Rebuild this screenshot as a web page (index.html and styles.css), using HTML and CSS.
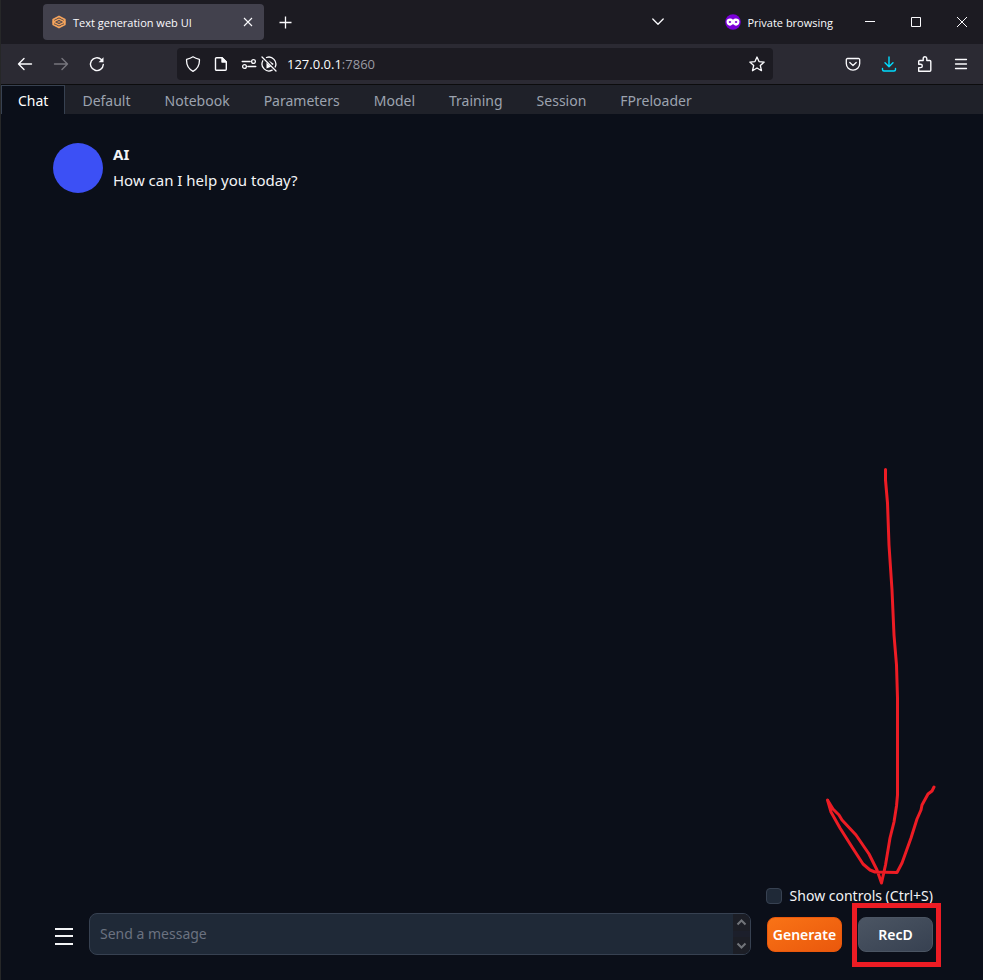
FILE: index.html
```html
<!DOCTYPE html>
<html lang="en">
<head>
<meta charset="utf-8">
<meta name="viewport" content="width=device-width, initial-scale=1">
<title>Text generation web UI</title>
<link rel="stylesheet" href="styles.css">
</head>
<body>
<div class="window">
  <header class="titlebar">
    <div class="browser-tab">
      <svg class="favicon" width="14" height="14" viewBox="0 0 14 14" fill="none" stroke="#f5a45c" stroke-linejoin="round"><path stroke-width="1.800" d="M7 1.500 12.800 4.500v5L7 12.500 1.200 9.500v-5Z"/><path stroke-width="1.400" d="M1.200 7 7 4.200 12.800 7 7 9.800Z"/><path d="M5.500 7h3" stroke-width="1.200"/></svg>
      <span class="tab-title">Text generation web UI</span>
      <button class="icon-btn tab-close" aria-label="Close tab"><svg width="10" height="10" viewBox="0 0 10 10" stroke="currentColor" stroke-width="1.100"><path d="M1 1l8 8M9 1 1 9"/></svg></button>
    </div>
    <button class="icon-btn new-tab" aria-label="New tab"><svg width="13" height="13" viewBox="0 0 13 13" stroke="currentColor" stroke-width="1.300"><path d="M6.500 .5v12M.5 6.500h12"/></svg></button>
    <button class="icon-btn tab-list" aria-label="List all tabs"><svg width="12" height="8" viewBox="0 0 12 8" fill="none" stroke="currentColor" stroke-width="1.300" stroke-linecap="round" stroke-linejoin="round"><path d="M.8 1 6 6.200 11.200 1"/></svg></button>
    <div class="private">
      <svg width="16" height="16" viewBox="0 0 16 16"><circle cx="8" cy="8" r="7.800" fill="#7a00d8"/><path fill="#fff" fill-rule="evenodd" d="M8 5.800C6.500 4 1.500 3.900 1.500 7.600c0 2.600 1.500 4.100 3.400 4.100C6.500 11.700 7 10.200 8 10.200s1.500 1.500 3.100 1.500c1.900 0 3.400-1.500 3.400-4.100C14.500 3.900 9.500 4 8 5.800ZM3.600 7.900c.6-1.200 2.100-1.200 2.700 0-.7 1.300-2 1.300-2.700 0Zm6.100 0c.6-1.200 2.100-1.200 2.700 0-.7 1.300-2 1.300-2.700 0Z"/></svg>
      <span>Private browsing</span>
    </div>
    <div class="window-buttons">
      <button class="icon-btn" aria-label="Minimize"><svg width="10" height="10" viewBox="0 0 10 10"><path d="M0 4h10v1H0z" fill="currentColor"/></svg></button>
      <button class="icon-btn" aria-label="Maximize"><svg width="10" height="10" viewBox="0 0 10 10" fill="none" stroke="currentColor"><path d="M.5.5h9v9h-9z"/></svg></button>
      <button class="icon-btn" aria-label="Close"><svg width="10" height="10" viewBox="0 0 10 10" stroke="currentColor"><path d="M0 0l10 10M10 0 0 10"/></svg></button>
    </div>
  </header>

  <div class="toolbar">
    <div class="nav-buttons">
      <button class="icon-btn" aria-label="Back"><svg width="16" height="16" viewBox="0 0 16 16" fill="none" stroke="currentColor" stroke-width="1.400" stroke-linecap="round" stroke-linejoin="round"><path d="M14.500 8H1.500M7 2.500 1.500 8 7 13.500"/></svg></button>
      <button class="icon-btn" aria-label="Forward" disabled><svg width="16" height="16" viewBox="0 0 16 16" fill="none" stroke="currentColor" stroke-width="1.400" stroke-linecap="round" stroke-linejoin="round"><path d="M1.500 8h13M9 2.500 14.500 8 9 13.500"/></svg></button>
      <button class="icon-btn" aria-label="Reload"><svg width="16" height="16" viewBox="0 0 16 16" fill="none" stroke="currentColor" stroke-width="1.400" stroke-linecap="round"><path d="M14.300 8.500A6.400 6.400 0 1 1 12.300 3.500"/><path d="M14.500 1.300v4.900H9.600Z" fill="currentColor" stroke="none"/></svg></button>
    </div>
    <div class="urlbar">
      <button class="icon-btn" aria-label="Tracking protection"><svg width="16" height="16" viewBox="0 0 16 16" fill="none" stroke="currentColor" stroke-width="1.300" stroke-linejoin="round"><path d="M8 .8c2 1.300 4 2 6.400 2.500C14.800 9 12.500 13 8 15.300 3.500 13 1.200 9 1.600 3.300 4 2.800 6 2.100 8 .8Z"/></svg></button>
      <button class="icon-btn" aria-label="Site information"><svg width="16" height="16" viewBox="0 0 16 16" fill="none" stroke="currentColor" stroke-width="1.400" stroke-linejoin="round"><path d="M3.500 1.700H9L13.300 6v7.300a1 1 0 0 1-1 1H3.500a1 1 0 0 1-1-1V2.700a1 1 0 0 1 1-1Z"/><path d="M9 1.700V6h4.300Z" fill="currentColor"/></svg></button>
      <button class="icon-btn" aria-label="Permissions"><svg width="16" height="16" viewBox="0 0 16 16" fill="none" stroke="currentColor" stroke-width="1.300" stroke-linecap="round"><path d="M1.200 5.500h8M6.800 10.500h8"/><circle cx="12.500" cy="5.500" r="1.900"/><circle cx="3.500" cy="10.500" r="1.900"/></svg></button>
      <button class="icon-btn autoplay" aria-label="Autoplay blocked"><svg width="16" height="16" viewBox="0 0 16 16" fill="none" stroke="currentColor" stroke-width="1.300" stroke-linecap="round"><path d="M1 1l14 14"/><path d="M5.500 1.500A7 7 0 0 1 14.200 11M1.800 4.800A7 7 0 0 0 11.200 14.200"/><path d="M7.500 4.200 12.800 8l-1.500 1ZM5.500 6.500l4.500 4.200L5.500 12.500Z" fill="currentColor" stroke="none"/></svg></button>
      <div class="url">127.0.0.1<span>:7860</span></div>
      <button class="icon-btn" aria-label="Bookmark this page"><svg width="16" height="16" viewBox="0 0 16 16" fill="none" stroke="currentColor" stroke-width="1.300" stroke-linejoin="round"><path d="M8 1l2 4.600 5.200.5-3.900 3.400 1.200 5.200L8 12l-4.500 2.700 1.200-5.200L.8 6.100 6 5.600Z"/></svg></button>
    </div>
    <div class="tool-buttons">
      <button class="icon-btn" aria-label="Save to Pocket"><svg width="16" height="16" viewBox="0 0 16 16" fill="none" stroke="currentColor" stroke-width="1.300" stroke-linecap="round" stroke-linejoin="round"><path d="M2.500 2.500h11a1.200 1.200 0 0 1 1.200 1.200V7.500a6.700 6.700 0 0 1-13.400 0V3.700a1.200 1.200 0 0 1 1.200-1.200Z"/><path d="M4.800 6.500 8 9.500l3.200-3"/></svg></button>
      <button class="icon-btn download" aria-label="Downloads"><svg width="16" height="16" viewBox="0 0 16 16" fill="none" stroke="currentColor" stroke-width="1.400" stroke-linecap="round" stroke-linejoin="round"><path d="M8 1v9.500M4 6.800l4 3.900 4-3.900M1.500 12.500v1a1.500 1.500 0 0 0 1.500 1.500h10a1.500 1.500 0 0 0 1.500-1.500v-1"/></svg></button>
      <button class="icon-btn" aria-label="Extensions"><svg width="16" height="16" viewBox="0 0 16 16" fill="none" stroke="currentColor" stroke-width="1.400" stroke-linejoin="round"><path d="M1.700 15.300V11.600h1.900a1.700 1.700 0 0 0 0-3.400H1.700V5.500a1 1 0 0 1 1-1h3.500V2.600a1.800 1.800 0 0 1 3.600 0v1.900h3a1 1 0 0 1 1 1v8.800a1 1 0 0 1-1 1Z"/></svg></button>
      <button class="icon-btn" aria-label="Application menu"><svg width="16" height="12" viewBox="0 0 16 12" stroke="currentColor" stroke-width="1.300" stroke-linecap="round"><path d="M2.500 1.500h11M2.500 6h11M2.500 10.500h11"/></svg></button>
    </div>
  </div>

  <nav class="app-tabs">
    <button class="app-tab active">Chat</button>
    <button class="app-tab">Default</button>
    <button class="app-tab">Notebook</button>
    <button class="app-tab">Parameters</button>
    <button class="app-tab">Model</button>
    <button class="app-tab">Training</button>
    <button class="app-tab">Session</button>
    <button class="app-tab">FPreloader</button>
  </nav>

  <main class="chat">
    <section class="messages">
      <article class="message">
        <div class="avatar"></div>
        <div class="message-text">
          <div class="author">AI</div>
          <p>How can I help you today?</p>
        </div>
      </article>
    </section>

    <form class="composer">
      <div class="show-controls">
        <input type="checkbox" id="show-controls">
        <label for="show-controls">Show controls (Ctrl+S)</label>
      </div>
      <div class="composer-row">
        <button type="button" class="menu-btn" aria-label="Chat menu"><svg width="18" height="18" viewBox="0 0 18 18" fill="currentColor"><path d="M0 1h18v2H0zM0 8h18v2H0zM0 16h18v2H0z"/></svg></button>
        <div class="message-box">
          <textarea rows="1" placeholder="Send a message" aria-label="Message"></textarea>
          <div class="scrollbar">
            <svg width="17" height="17" viewBox="0 0 17 17" fill="none" stroke="currentColor" stroke-width="2"><path d="M4.500 10.500 8.500 6.500l4 4"/></svg>
            <svg width="17" height="17" viewBox="0 0 17 17" fill="none" stroke="currentColor" stroke-width="2"><path d="M4.500 6.500 8.500 10.500l4-4"/></svg>
          </div>
        </div>
        <div class="actions">
          <button type="button" class="btn primary">Generate</button>
          <button type="button" class="btn secondary">RecD</button>
        </div>
      </div>
    </form>
  </main>

  <svg class="annotation" width="130" height="515" viewBox="820 460 130 515" fill="none" stroke="#ed1c24" aria-hidden="true">
    <path stroke-width="3" stroke-linecap="round" stroke-linejoin="round" d="M885.500 469.500V480L887.500 503 889 545 892 590 894 635 896.500 665 897.500 698V795L896.500 806 894 822 890 838 885.500 865 881.500 883 877 870 869 854 856 835 842 820 839 815 833 809 827.500 800 831 812 840 828 852 847 863 864 870 870 875 872 897 872.500 902 863 911 838 917 819 921 810 922 805 928 794 932 791 934 787"/>
    <path stroke-width="5" d="M854.500 905.500h84v59h-84z"/>
  </svg>
</div>
</body>
</html>
```
FILE: styles.css
```css
* {
  box-sizing: border-box;
}

body {
  margin: 0;
  background: #0b0f19;
  color: #f3f4f6;
  font-family: "Noto Sans", "Open Sans", sans-serif;
}

button {
  font: inherit;
  border: 0;
  padding: 0;
}

svg {
  display: block;
}

.window {
  position: relative;
  display: flex;
  flex-direction: column;
  min-height: 100vh;
  border-left: 1px solid #262728;
}

.icon-btn {
  display: flex;
  align-items: center;
  justify-content: center;
  background: none;
  color: #fbfbfe;
}

.icon-btn:disabled {
  color: #77767e;
}

/* Browser title bar */
.titlebar {
  display: flex;
  align-items: center;
  height: 44px;
  padding: 0 16px 0 42px;
  background: #1c1b22;
  color: #fbfbfe;
  font-family: "Open Sans", "Noto Sans", sans-serif;
  font-size: 11px;
}

.browser-tab {
  display: flex;
  align-items: center;
  gap: 7px;
  width: 221px;
  height: 36px;
  padding: 0 11px 0 9px;
  border-radius: 4px;
  background: #42414d;
}

.tab-close {
  margin-left: auto;
}

.new-tab {
  margin-left: 15px;
}

.tab-list {
  margin-left: auto;
}

.private {
  display: flex;
  align-items: center;
  gap: 6px;
  margin-left: 61px;
}

.window-buttons {
  display: flex;
  gap: 36px;
  margin-left: 32px;
}

/* Browser toolbar */
.toolbar {
  display: flex;
  align-items: center;
  height: 41px;
  padding: 0 14px 0 16px;
  border-bottom: 1px solid #0c0c0d;
  background: #2b2a33;
}

.nav-buttons,
.tool-buttons {
  display: flex;
  gap: 20px;
}

.urlbar {
  display: flex;
  flex: 1;
  align-items: center;
  gap: 12px;
  height: 32px;
  margin: 0 72px;
  padding: 0 8px;
  border-radius: 4px;
  background: #1c1b22;
}

.autoplay {
  margin-left: -8px;
}

.url {
  flex: 1;
  margin-left: -2px;
  color: #fbfbfe;
  font-family: "Open Sans", "Noto Sans", sans-serif;
  font-size: 13px;
}

.url span {
  color: #9a9aa2;
}

.download {
  color: #00ddff;
}

/* Application tabs */
.app-tabs {
  display: flex;
  height: 29px;
  background: #1f2129;
}

.app-tab {
  padding: 0 16px;
  border: 1px solid transparent;
  border-bottom: 0;
  background: none;
  color: #9ca3af;
  font-size: 14px;
}

.app-tab.active {
  border-color: #374151;
  background: #0b0f19;
  color: #ffffff;
}

/* Chat */
.chat {
  display: flex;
  flex: 1;
  flex-direction: column;
  padding: 29px 50px 25px 52px;
}

.messages {
  flex: 1;
}

.message {
  display: flex;
  gap: 10px;
}

.avatar {
  width: 50px;
  height: 50px;
  border-radius: 50%;
  background: #3c50f5;
}

.message-text {
  font-size: 15px;
  line-height: 22px;
}

.author {
  font-weight: 700;
}

.message-text p {
  margin: 4px 0 0;
}

.composer {
  display: flex;
  flex-direction: column;
  gap: 7px;
}

.show-controls {
  display: flex;
  align-items: center;
  align-self: flex-end;
  gap: 8px;
  font-size: 14px;
  line-height: 20px;
}

.show-controls input {
  width: 16px;
  height: 16px;
  margin: 0;
  appearance: none;
  border: 1px solid #374151;
  border-radius: 4px;
  background: #1f2937;
}

.composer-row {
  display: flex;
  align-items: center;
  gap: 16px;
}

.menu-btn {
  padding: 4px 0 0 2px;
  background: none;
  color: #f3f4f6;
}

.message-box {
  display: flex;
  flex: 1;
  height: 42px;
  overflow: hidden;
  border: 1px solid #374151;
  border-radius: 8px;
  background: #1f2937;
}

.message-box textarea {
  flex: 1;
  min-width: 0;
  padding: 10px;
  border: 0;
  outline: 0;
  overflow: hidden;
  resize: none;
  background: none;
  color: #f3f4f6;
  font: inherit;
  font-size: 14px;
  line-height: 20px;
}

.message-box textarea::placeholder {
  color: #6b7280;
}

.scrollbar {
  display: flex;
  flex-direction: column;
  justify-content: space-between;
  background: #1c1f2b;
  color: #71747a;
}

.scrollbar svg {
  background: #1c1e26;
}

.actions {
  display: flex;
  gap: 16px;
}

.btn {
  width: 75px;
  height: 35px;
  border: 1px solid #ea580c;
  border-radius: 8px;
  color: #ffffff;
  font-size: 14px;
  font-weight: 600;
}

.primary {
  background: linear-gradient(to bottom right, #f97316, #ea580c);
}

.secondary {
  border-color: #4b5563;
  background: linear-gradient(to bottom right, #4b5563, #374151);
}

/* Hand-drawn pointer to the RecD button */
.annotation {
  position: absolute;
  right: 33px;
  bottom: 5px;
  pointer-events: none;
}
```
